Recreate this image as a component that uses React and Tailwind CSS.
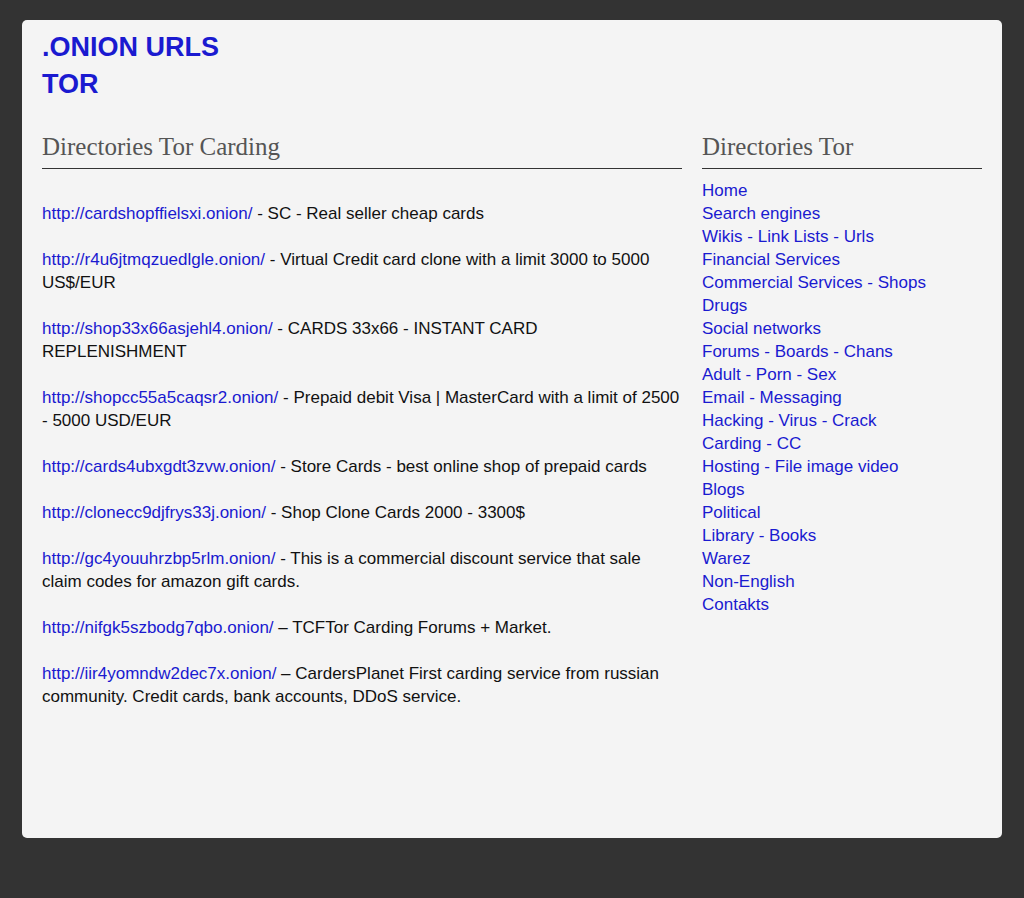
const entries = [
  { url: "http://cardshopffielsxi.onion/", sep: "-", text: "SC - Real seller cheap cards" },
  { url: "http://r4u6jtmqzuedlgle.onion/", sep: "-", text: "Virtual Credit card clone with a limit 3000 to 5000 US$/EUR" },
  { url: "http://shop33x66asjehl4.onion/", sep: "-", text: "CARDS 33x66 - INSTANT CARD REPLENISHMENT" },
  { url: "http://shopcc55a5caqsr2.onion/", sep: "-", text: "Prepaid debit Visa | MasterCard with a limit of 2500 - 5000 USD/EUR" },
  { url: "http://cards4ubxgdt3zvw.onion/", sep: "-", text: "Store Cards - best online shop of prepaid cards" },
  { url: "http://clonecc9djfrys33j.onion/", sep: "-", text: "Shop Clone Cards 2000 - 3300$" },
  { url: "http://gc4youuhrzbp5rlm.onion/", sep: "-", text: "This is a commercial discount service that sale claim codes for amazon gift cards." },
  { url: "http://nifgk5szbodg7qbo.onion/", sep: "\u2013", text: "TCFTor Carding Forums + Market." },
  { url: "http://iir4yomndw2dec7x.onion/", sep: "\u2013", text: "CardersPlanet First carding service from russian community. Credit cards, bank accounts, DDoS service." },
];

const categories = [
  "Home",
  "Search engines",
  "Wikis - Link Lists - Urls",
  "Financial Services",
  "Commercial Services - Shops",
  "Drugs",
  "Social networks",
  "Forums - Boards - Chans",
  "Adult - Porn - Sex",
  "Email - Messaging",
  "Hacking - Virus - Crack",
  "Carding - CC",
  "Hosting - File image video",
  "Blogs",
  "Political",
  "Library - Books",
  "Warez",
  "Non-English",
  "Contakts",
];

export default function App() {
  return (
    <div className="min-h-[898px] bg-[#333333] px-[22px] pt-[20px] pb-[60px] font-['Liberation_Sans',Arial,sans-serif]">
      <div className="h-[818px] rounded-[5px] bg-[#f4f4f4] px-[20px] pt-[9px]">
        {/* Header */}
        <h1 className="text-[27px] font-bold leading-[37px] text-[#1a1ad0]">
          .ONION URLS
          <br />
          TOR
        </h1>

        <div className="mt-[29px] flex gap-[20px]">
          {/* Main column */}
          <div className="w-[640px]">
            <h2 className="border-b border-[#333333] pb-[6px] font-['Liberation_Serif',Georgia,serif] text-[25px] leading-[30px] text-[#555555]">
              Directories Tor Carding
            </h2>
            <div className="mt-[33px] flex flex-col gap-[23px]">
              {entries.map((e) => (
                <p key={e.url} className="text-[17px] leading-[23px] text-[#111111]">
                  <a href="#" className="text-[#1a1ad0]">{e.url}</a> {e.sep} {e.text}
                </p>
              ))}
            </div>
          </div>

          {/* Sidebar */}
          <div className="w-[280px]">
            <h2 className="border-b border-[#333333] pb-[6px] font-['Liberation_Serif',Georgia,serif] text-[25px] leading-[30px] text-[#555555]">
              Directories Tor
            </h2>
            <ul className="mt-[10px]">
              {categories.map((c) => (
                <li key={c} className="text-[17px] leading-[23px]">
                  <a href="#" className="text-[#1a1ad0]">{c}</a>
                </li>
              ))}
            </ul>
          </div>
        </div>
      </div>
    </div>
  );
}
